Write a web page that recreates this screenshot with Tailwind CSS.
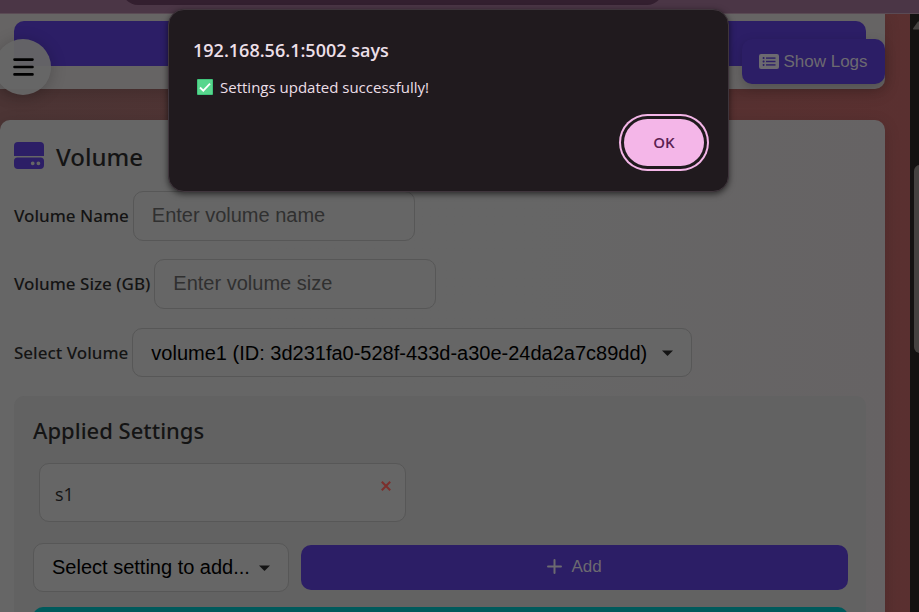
<!DOCTYPE html>
<html lang="en">
<head>
<meta charset="utf-8">
<meta name="viewport" content="width=device-width, initial-scale=1">
<title>Volume settings</title>
<script src="https://cdn.jsdelivr.net/npm/@tailwindcss/browser@4"></script>
</head>
<body class="relative flex h-screen flex-col overflow-hidden bg-[#553030] font-['Open_Sans','Noto_Sans',sans-serif] text-[#141414]">
  <!-- Browser toolbar edge -->
  <div class="flex h-[14px] shrink-0 flex-col overflow-hidden border-b border-[#5a4a54] bg-[#4b3646] pr-[256px] pl-[122px]">
    <div class="-mt-[27px] h-[32px] shrink-0 rounded-full bg-[#331f2f]"></div>
  </div>

  <div class="flex min-h-0 flex-1">
    <main class="relative min-w-0 flex-1 overflow-hidden bg-linear-to-r from-[#4c3535] to-[#5a3030] pr-[25px]">
      <header class="rounded-br-[10px] bg-[#666464] pt-[7px] pr-[19px] pb-[23px] pl-[14px] shadow-[0_4px_16px_rgba(0,0,0,0.15)]">
        <div class="h-[45px] rounded-[10px] bg-[#2c1e66]"></div>
      </header>

      <section class="mt-[31px] rounded-t-[10px] bg-linear-to-r from-[#666666] from-60% to-[#666364] pt-[17px] pr-[19px] pb-8 pl-[14px] shadow-[0_4px_16px_rgba(0,0,0,0.15)]">
        <h2 class="flex h-[40px] items-center gap-[12px] font-['Noto_Sans',sans-serif] text-[24px] font-medium">
          <svg class="h-[28px] w-[30px] -translate-y-0.5" viewBox="0 0 30 28" fill="#2c1e66" aria-hidden="true">
            <path d="M4 1h22a4 4 0 0 1 4 4v10H0V5a4 4 0 0 1 4-4z"/>
            <path fill-rule="evenodd" d="M3.500 16.500h23A3.500 3.500 0 0 1 30 20v4a4 4 0 0 1-4 4H4a4 4 0 0 1-4-4v-4a3.500 3.500 0 0 1 3.500-3.500zM18.700 20.400a1.900 1.900 0 1 0 0 3.800 1.900 1.900 0 0 0 0-3.800zm5.700 0a1.900 1.900 0 1 0 0 3.800 1.900 1.900 0 0 0 0-3.800z"/>
          </svg>
          Volume
        </h2>

        <form>
          <div class="mt-[14px] flex items-center gap-[4px]">
            <label for="vname" class="font-['Noto_Sans',sans-serif] text-[17px] font-medium whitespace-nowrap">Volume Name</label>
            <input id="vname" type="text" placeholder="Enter volume name" class="h-[50px] w-[282px] rounded-[10px] border border-[#575757] bg-[#666666] px-[18px] pb-[2px] font-['Liberation_Sans',sans-serif] text-[20px] placeholder:text-[#303030]">
          </div>
          <div class="mt-[18px] flex items-center gap-[4px]">
            <label for="vsize" class="font-['Noto_Sans',sans-serif] text-[17px] font-medium whitespace-nowrap">Volume Size (GB)</label>
            <input id="vsize" type="text" placeholder="Enter volume size" class="h-[50px] w-[282px] rounded-[10px] border border-[#575757] bg-[#666666] px-[18px] pb-[2px] font-['Liberation_Sans',sans-serif] text-[20px] placeholder:text-[#303030]">
          </div>
          <div class="mt-[19px] flex items-center gap-[4px]">
            <label for="vsel" class="font-['Noto_Sans',sans-serif] text-[17px] font-medium whitespace-nowrap">Select Volume</label>
            <div class="relative w-[560px]">
              <select id="vsel" class="block h-[49px] w-full appearance-none rounded-[10px] border border-[#575757] bg-[#666666] pr-[38px] pl-[18px] font-['Liberation_Sans',sans-serif] text-[20px] text-black">
                <option>volume1 (ID: 3d231fa0-528f-433d-a30e-24da2a7c89dd)</option>
              </select>
              <svg class="pointer-events-none absolute top-[22px] right-[19px] h-[6px] w-[11px]" viewBox="0 0 11 6" fill="#141414" aria-hidden="true"><path d="M0 .5h11L5.500 6z"/></svg>
            </div>
          </div>
        </form>

        <section class="mt-[19px] rounded-[10px] bg-[#626262] pt-[18px] pr-[18px] pb-8 pl-[19px]">
          <h3 class="font-['Noto_Sans',sans-serif] text-[22px] leading-[32px] font-medium">Applied Settings</h3>
          <div class="mt-[17px] ml-[6px] flex h-[59px] w-[367px] items-center justify-between rounded-[10px] border border-[#575757] bg-[#666666] pr-[13px] pl-[15px]">
            <span class="pt-[3px] text-[18px]">s1</span>
            <button type="button" aria-label="Remove s1" class="mb-[14px] p-[1px]">
              <svg class="size-[10px]" viewBox="0 0 10 10" stroke="#7c2f2c" stroke-width="2" aria-hidden="true"><path d="M.8.8l8.400 8.400M9.200.8L.8 9.200"/></svg>
            </button>
          </div>
          <div class="mt-[21px] flex items-center gap-[12px]">
            <div class="relative w-[256px] shrink-0">
              <select aria-label="Setting to add" class="block h-[49px] w-full appearance-none rounded-[10px] border border-[#575757] bg-[#666666] pr-[36px] pb-[2px] pl-[18px] font-['Liberation_Sans',sans-serif] text-[20px] text-black">
                <option>Select setting to add...</option>
              </select>
              <svg class="pointer-events-none absolute top-[22px] right-[19px] h-[6px] w-[11px]" viewBox="0 0 11 6" fill="#141414" aria-hidden="true"><path d="M0 .5h11L5.500 6z"/></svg>
            </div>
            <button type="button" class="flex h-[45px] flex-1 items-center justify-center gap-[9px] rounded-[10px] bg-[#2c1e66] pb-[2px] font-['Liberation_Sans',sans-serif] text-[17px] text-[#6c6a70]">
              <svg class="size-[15px]" viewBox="0 0 15 15" stroke="#6c6a70" stroke-width="2" stroke-linecap="round" aria-hidden="true"><path d="M7.500 1v13M1 7.500h13"/></svg>
              Add
            </button>
          </div>
          <button type="button" aria-label="Save settings" class="mt-[15px] block h-[45px] w-full rounded-[10px] bg-[#005a5c]"></button>
        </section>
      </section>

      <button type="button" class="absolute top-[25px] right-[25px] flex h-[45px] w-[143px] items-center justify-center gap-[4px] rounded-[10px] bg-[#2c1e66] font-['Liberation_Sans',sans-serif] text-[17px] text-[#6c6a70] shadow-[0_4px_12px_rgba(0,0,0,0.2)]">
        <svg class="h-[15px] w-[20px]" viewBox="0 0 20 15" aria-hidden="true">
          <rect width="20" height="15" rx="2" fill="#6c6a70"/>
          <g fill="#2c1e66"><rect x="3.600" y="3.100" width="2" height="2" rx=".8"/><rect x="3.600" y="6.500" width="2" height="2" rx=".8"/><rect x="3.600" y="9.900" width="2" height="2" rx=".8"/><rect x="7" y="3.400" width="9.500" height="1.400"/><rect x="7" y="6.800" width="9.500" height="1.400"/><rect x="7" y="10.200" width="9.500" height="1.400"/></g>
        </svg>
        Show Logs
      </button>

      <button type="button" aria-label="Menu" class="absolute top-[25px] left-[-5px] flex size-[56px] items-center justify-center rounded-full bg-[#666666]/95 shadow-[0_2px_16px_rgba(0,0,0,0.22)]">
        <svg class="h-[18px] w-[21px]" viewBox="0 0 21 18" stroke="#000" stroke-width="2.600" stroke-linecap="round" aria-hidden="true"><path d="M1.500 1.600h18M1.500 9h18M1.500 16.400h18"/></svg>
      </button>
    </main>

    <!-- Scrollbar -->
    <div class="w-[9px] shrink-0 overflow-hidden bg-[#131211]" aria-hidden="true">
      <svg class="mt-[7px] ml-[3px] h-[9px] w-[12px]" viewBox="0 0 12 9" fill="#444240"><path d="M5 .5h2L12 8.500H.5Q0 8.500 0 7.500z"/></svg>
      <div class="mt-[135px] ml-[4px] h-[188px] w-[12px] rounded-[6px] bg-[#444240]"></div>
    </div>
  </div>

  <div role="alertdialog" aria-labelledby="dlg-title" aria-describedby="dlg-text" class="absolute top-[9px] left-[168px] flex h-[183px] w-[561px] flex-col rounded-[16px] border border-[#3f353c] bg-[#201a1e] px-[24px] pt-[26px] text-[#ecdfe7] shadow-[0_2px_6px_rgba(0,0,0,0.6)]">
    <h1 id="dlg-title" class="text-[18px] leading-[28px] font-semibold">192.168.56.1:5002 says</h1>
    <p id="dlg-text" class="mt-[11px] flex items-center gap-[7px] pl-[4px] text-[15px] leading-[24px]">
      <svg class="size-[16px]" viewBox="0 0 16 16" role="img" aria-label="Done"><rect width="16" height="16" rx="1" fill="#3fc47b"/><rect x="1" y="1" width="14" height="14" fill="#58d68d"/><path d="M3 8.500l3.300 3.200L13 4.600" fill="none" stroke="#fff" stroke-width="1.800"/></svg>
      Settings updated successfully!
    </p>
    <button type="button" class="mt-[20px] h-[47px] w-[80px] self-end rounded-full bg-[#f4b6e8] text-[15px] font-semibold text-[#5b1f52] ring-2 ring-[#f4b6e8] ring-offset-3 ring-offset-[#201a1e]">OK</button>
  </div>
</body>
</html>
